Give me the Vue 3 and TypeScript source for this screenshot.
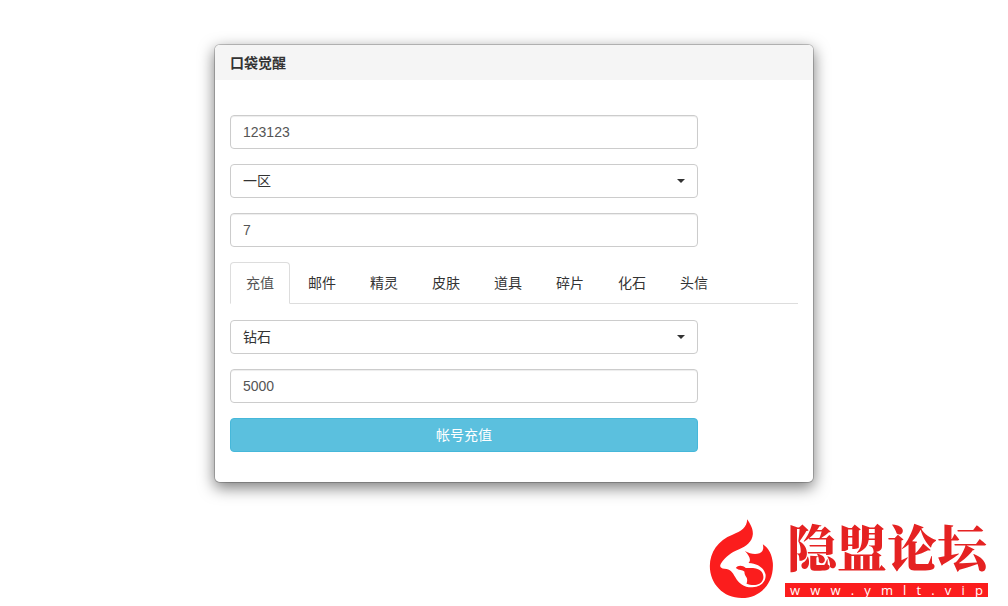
<script setup lang="ts">
import { ref } from 'vue'

const account = ref('123123')
const zone = ref('一区')
const quantity = ref('7')
const product = ref('钻石')
const amount = ref('5000')

const tabs: string[] = ['充值', '邮件', '精灵', '皮肤', '道具', '碎片', '化石', '头信']
const activeTab = ref(0)
const siteAddress: string[] = Array.from('www.ymlt.vip')
</script>

<template>
  <main class="page">
    <form class="card" @submit.prevent>
      <h1 class="card-title">口袋觉醒</h1>
      <div class="card-body">
        <input v-model="account" class="field" type="text" aria-label="账号" />
        <div class="select-box field-width">
          <select v-model="zone" class="field select" aria-label="区服">
            <option>一区</option>
          </select>
        </div>
        <input v-model="quantity" class="field" type="text" aria-label="编号" />
        <div class="tabs" role="tablist">
          <button
            v-for="(tab, i) in tabs"
            :key="tab"
            type="button"
            role="tab"
            class="tab"
            :class="{ active: i === activeTab }"
            :aria-selected="i === activeTab"
            @click="activeTab = i"
          >{{ tab }}</button>
        </div>
        <div class="select-box field-width">
          <select v-model="product" class="field select" aria-label="充值项目">
            <option>钻石</option>
          </select>
        </div>
        <input v-model="amount" class="field" type="text" aria-label="数量" />
        <button class="submit field-width" type="submit">帐号充值</button>
      </div>
    </form>

    <aside class="brand">
      <svg class="flame" viewBox="28 26 194 240" aria-hidden="true">
        <path
          fill="#fb1d1d"
          d="M142 27 C150 40 160 53 159 72 C157 95 139 108 118 117 C94 127 78 138 63 160 C58 169 63 175 74 175 C92 176 98 186 106 200 C116 220 134 232 158 231 C186 229 200 210 197 192 C192 172 174 160 146 158 C155 150 149 136 135 122 C150 131 166 133 179 129 C190 124 192 114 189 102 C208 114 217 136 219 158 C223 216 184 263 126 263 C70 263 30 220 30 167 C30 126 55 89 98 73 C124 63 142 51 142 27 Z"
        />
        <path
          fill="#fb1d1d"
          d="M108 173 C114 164 128 164 138 173 C154 173 172 171 184 183 C195 195 192 213 179 220 C168 226 151 224 140 220 C142 215 143 209 141 203 C138 196 133 193 134 184 C127 178 118 181 108 173 Z"
        />
      </svg>
      <div class="brand-text">
        <span class="brand-name">隐盟论坛</span>
        <span class="brand-address"><span v-for="(c, i) in siteAddress" :key="i">{{ c }}</span></span>
      </div>
    </aside>
  </main>
</template>

<style>
body {
  margin: 0;
  background: #fff;
}
</style>

<style scoped>
.page {
  position: relative;
  box-sizing: border-box;
  min-height: 100vh;
  padding: 44px 0 24px 20px;
  color: #333;
  font: 14px/20px "Liberation Sans", "Noto Sans CJK SC", sans-serif;
}

.card {
  box-sizing: border-box;
  max-width: 600px;
  margin: 0 auto;
  overflow: hidden;
  background: #fff;
  border: 1px solid rgba(0, 0, 0, 0.2);
  border-radius: 6px;
  background-clip: padding-box;
  box-shadow: 0 5px 15px rgba(0, 0, 0, 0.5);
}

.card-title {
  margin: 0;
  padding: 8px 15px 7px;
  background: #f5f5f5;
  font-size: 14px;
  line-height: 20px;
  font-weight: 700;
}

.card-body {
  display: flex;
  flex-direction: column;
  gap: 15px;
  padding: 35px 15px 30px;
}

.field,
.field-width {
  box-sizing: border-box;
  width: calc(100% - 100px);
}

.field {
  display: block;
  height: 34px;
  margin: 0;
  padding: 6px 12px;
  color: #555;
  font: inherit;
  background: #fff;
  border: 1px solid #ccc;
  border-radius: 4px;
  box-shadow: inset 0 1px 1px rgba(0, 0, 0, 0.075);
}

.select-box {
  position: relative;
}

.select-box::after {
  content: "";
  position: absolute;
  top: 15px;
  right: 13px;
  border: 4px solid transparent;
  border-top-color: #333;
  border-bottom: 0;
  pointer-events: none;
}

.select {
  width: 100%;
  appearance: none;
  color: #333;
  box-shadow: none;
}

.tabs {
  display: flex;
  gap: 2px;
  height: 41px;
  margin-bottom: 1px;
  border-bottom: 1px solid #ddd;
}

.tab {
  height: 42px;
  margin: 0;
  padding: 10px 15px;
  color: #333;
  font: inherit;
  background: transparent;
  border: 1px solid transparent;
  border-radius: 4px 4px 0 0;
}

.tab.active {
  color: #555;
  background: #fff;
  border-color: #ddd;
  border-bottom-color: #fff;
}

.submit {
  height: 34px;
  padding: 6px 12px;
  color: #fff;
  font: inherit;
  background: #5bc0de;
  border: 1px solid #46b8da;
  border-radius: 4px;
}

.brand {
  position: absolute;
  right: 20px;
  bottom: 7px;
  display: flex;
  align-items: flex-end;
  gap: 11px;
}

.flame {
  display: block;
  width: 65px;
  height: 80px;
}

.brand-text {
  display: flex;
  flex-direction: column;
  gap: 8px;
  width: 203px;
}

.brand-name {
  padding-left: 2px;
  color: #e52222;
  font: 900 50px/60px "Noto Serif CJK SC", "Noto Sans CJK SC", serif;
  white-space: nowrap;
}

.brand-address {
  display: flex;
  justify-content: space-between;
  margin-bottom: 2px;
  padding: 0 5px;
  color: #fff;
  background: #fb1d1d;
  font: 13px/14px "Open Sans", sans-serif;
}
</style>
